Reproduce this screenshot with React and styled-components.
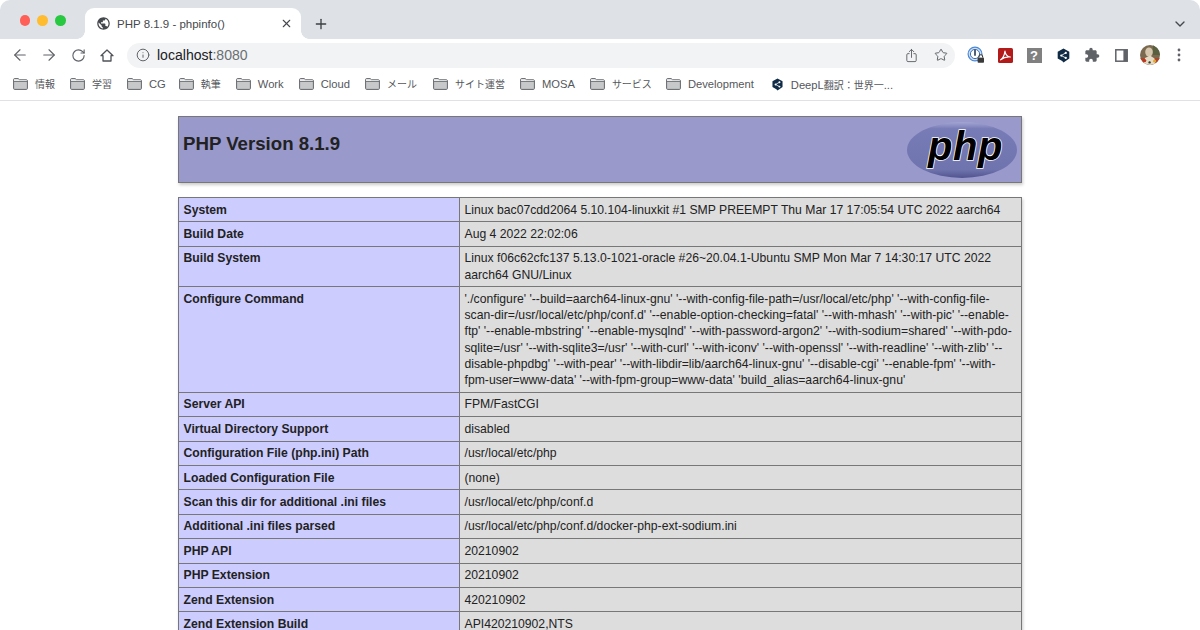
import React from 'react';
import styled, { createGlobalStyle } from 'styled-components';
import { ArrowLeft, ArrowRight, RotateCw, Info, Star, ChevronDown, X, Plus } from 'lucide-react';
import { IoShareOutline } from 'react-icons/io5';
import { MdExtension, MdPublic } from 'react-icons/md';

const SANS = `"Liberation Sans", "Noto Sans CJK JP", sans-serif`;

const GlobalStyle = createGlobalStyle`
  html, body {
    margin: 0;
    padding: 0;
    height: 630px;
    overflow: hidden;
    background: #fff;
    font-family: ${SANS};
  }
`;

const TabStrip = styled.div`
  height: 39px;
  background: #dee1e6;
  display: flex;
  align-items: flex-end;
  border-radius: 10px 10px 0 0;
  color: #3c4043;
`;

const Lights = styled.div`
  display: flex;
  gap: 7px;
  padding: 0 0 13.5px 19.5px;
  width: 66px;
  box-sizing: border-box;
`;

const Light = styled.span`
  width: 11px;
  height: 11px;
  border-radius: 50%;
  background: ${(p) => p.$color};
`;

const Tab = styled.div`
  position: relative;
  width: 216px;
  height: 31px;
  box-sizing: border-box;
  background: #fff;
  border-radius: 9px 9px 0 0;
  display: flex;
  align-items: center;
  padding: 0 8px 0 11px;
  font-size: 11.5px;
  color: #45484c;
  margin-left: 19px;
  &::before, &::after {
    content: '';
    position: absolute;
    bottom: 0;
    width: 8px;
    height: 8px;
  }
  &::before {
    left: -8px;
    background: radial-gradient(circle at 0 0, #dee1e6 7.5px, #fff 8px);
  }
  &::after {
    right: -8px;
    background: radial-gradient(circle at 100% 0, #dee1e6 7.5px, #fff 8px);
  }
`;

const TabTitle = styled.span`
  flex: 1;
  margin-left: 6px;
  white-space: nowrap;
`;

const NewTab = styled.div`
  display: flex;
  align-items: center;
  height: 31px;
  margin-left: 12px;
  color: #3c4043;
`;

const StripEnd = styled.div`
  margin-left: auto;
  height: 31px;
  display: flex;
  align-items: center;
  padding-right: 12px;
  color: #45484c;
`;

const Toolbar = styled.div`
  height: 32px;
  display: flex;
  align-items: center;
  padding: 0 6.5px 0 5.5px;
  background: #fff;
`;

const ToolButton = styled.div`
  width: 29px;
  height: 28px;
  flex: none;
  display: flex;
  align-items: center;
  justify-content: center;
  color: #5f6368;
`;

const Omnibox = styled.div`
  flex: 1;
  height: 25px;
  margin: 0 6.5px 0 5.5px;
  background: #f1f3f4;
  border-radius: 13px;
  display: flex;
  align-items: center;
  padding-left: 9px;
  color: #5f6368;
`;

const Url = styled.div`
  flex: 1;
  margin-left: 7px;
  font-size: 14.05px;
  color: #6b6f73;
  b {
    font-weight: 400;
    color: #202124;
  }
`;

const OmniIcon = styled.div`
  width: 29px;
  display: flex;
  justify-content: center;
  color: #5f6368;
`;

const Bookmarks = styled.div`
  height: 26px;
  padding: 0 0 3px 13px;
  border-bottom: 1px solid #dfe1e5;
  display: flex;
  align-items: center;
  background: #fff;
  box-sizing: content-box;
`;

const Bookmark = styled.div`
  display: flex;
  align-items: center;
  gap: 7px;
  margin-right: ${(p) => p.$end || 15}px;
  font-size: 11.2px;
  color: #54575b;
  white-space: nowrap;
`;

const JpLabel = styled.span`
  font-size: 10px;
  padding-bottom: 1.5px;
`;

const JpRun = styled.span`
  font-size: 10px;
`;

const Page = styled.main`
  width: 844px;
  margin: 15px auto 0;
  color: #222;
`;

const Header = styled.header`
  height: 67px;
  box-sizing: border-box;
  background: #9999cc;
  border: 1px solid #777;
  box-shadow: 1px 2px 3px #ccc;
  display: flex;
  justify-content: space-between;
  padding: 4px 3px 0 4px;
  margin-bottom: 14px;
`;

const Title = styled.h1`
  margin: 11px 0 0;
  font-size: 18.65px;
  line-height: 23px;
  font-weight: 700;
  color: #222;
`;

const InfoTable = styled.table`
  width: 844px;
  table-layout: fixed;
  border-collapse: collapse;
  border: 0;
  box-shadow: 1px 2px 3px #ccc;
  font-size: 12.19px;
  line-height: 16.2px;
`;

const KeyCell = styled.th`
  width: 281px;
  box-sizing: border-box;
  background: #ccccff;
  border: 1px solid #777;
  padding: 3.6px 4.5px;
  text-align: left;
  vertical-align: top;
  font-weight: 700;
  color: #222;
`;

const ValueCell = styled.td`
  background: #dddddd;
  border: 1px solid #777;
  padding: 3.6px 7px 3.6px 4.5px;
  vertical-align: top;
  color: #222;
  overflow-wrap: break-word;
`;

const Folder = () => (
  <svg width="15" height="12" viewBox="0 0 15 12">
    <path d="M.6 1.6C.6.9 1 .6 1.6.6h3.6l1.3 1.2h6.9c.6 0 1 .4 1 1v7.6c0 .6-.4 1-1 1H1.6c-.6 0-1-.4-1-1z" fill="#c6c8ca" stroke="#63666a" strokeWidth="1" />
    <path d="M1 1.2h4l1.2 1.1h7.6v.9H1z" fill="#eceded" />
    <path d="M.8 3.5h13.4" stroke="#63666a" strokeWidth=".8" />
  </svg>
);

const DeepL = ({ size }) => (
  <svg width={size} height={size} viewBox="0 0 16 16">
    <path d="M8 .6l6.2 3.4v7.2L8 15.4l-1.4-1.6-4.8-2.6V4z" fill="#0f2b46" />
    <circle cx="5.6" cy="8" r="1.2" fill="#fff" />
    <circle cx="10.4" cy="5.2" r="1.2" fill="#fff" />
    <circle cx="10.4" cy="10.6" r="1.2" fill="#fff" />
    <path d="M5.6 8l4.8-2.8M5.6 8l4.8 2.6" stroke="#fff" strokeWidth=".9" />
  </svg>
);

const Home = () => (
  <svg width="14" height="13" viewBox="0 0 14 13" fill="none" stroke="#4f5357" strokeWidth="1.3" strokeLinejoin="round">
    <path d="M1 6.7L7 1l6 5.7h-2v5.3H3V6.7z" />
  </svg>
);

const OnePassword = () => (
  <svg width="18" height="18" viewBox="0 0 18 18">
    <circle cx="8" cy="8" r="6.9" fill="#cfe0f7" stroke="#4a88d8" strokeWidth="1.2" />
    <circle cx="8" cy="8" r="4.6" fill="#fff" stroke="#3f6ea8" strokeWidth="1" />
    <rect x="7.1" y="3.6" width="1.8" height="6.4" rx=".9" fill="#3d4f66" />
    <rect x="10.6" y="11.6" width="6.4" height="5.2" rx=".8" fill="#3a3a3a" />
    <path d="M12 11.6v-1a1.8 1.8 0 0 1 3.6 0v1" fill="#fff" stroke="#3a3a3a" strokeWidth="1.1" />
  </svg>
);

const Acrobat = () => (
  <svg width="15" height="15" viewBox="0 0 15 15">
    <rect width="15" height="15" rx="1.6" fill="#b31b1b" />
    <path d="M2.6 11.8c2.2-1.2 3.8-4.4 4.4-8.6.3 3.2 2 5.2 5.4 5.8-3.2-.4-6.6.3-9.8 2.8z" fill="none" stroke="#fff" strokeWidth="1.2" strokeLinejoin="round" />
  </svg>
);

const QuestionBadge = styled.div`
  width: 15px;
  height: 15px;
  background: #808080;
  color: #fff;
  font-size: 13px;
  font-weight: 700;
  line-height: 15px;
  text-align: center;
`;

const SidePanel = () => (
  <svg width="13" height="13" viewBox="0 0 13 13">
    <rect x=".8" y=".8" width="11.4" height="11.4" fill="#fff" stroke="#5f6368" strokeWidth="1.5" />
    <rect x="8.4" y="1" width="3.6" height="11" fill="#5f6368" />
  </svg>
);

const Avatar = () => (
  <svg width="20" height="20" viewBox="0 0 20 20">
    <defs>
      <clipPath id="avatar-clip"><circle cx="10" cy="10" r="10" /></clipPath>
    </defs>
    <g clipPath="url(#avatar-clip)">
      <rect width="20" height="20" fill="#7c6a50" />
      <rect x="13" width="7" height="10" fill="#59603f" />
      <rect y="13" width="20" height="7" fill="#a9472a" />
      <ellipse cx="9" cy="7" rx="3.8" ry="4.6" fill="#d6c6ae" />
      <path d="M3.5 20l1.5-7 5-2.4 4.5 3 1 6.4z" fill="#e6dcc6" />
      <circle cx="4.6" cy="15.6" r="1.7" fill="#c0351f" />
      <circle cx="14.6" cy="16" r="1.6" fill="#e3a72f" />
      <circle cx="9.6" cy="17.4" r="1.2" fill="#2f3a2a" />
    </g>
  </svg>
);

const Dots = () => (
  <svg width="4" height="14" viewBox="0 0 4 14" fill="#5f6368">
    <circle cx="2" cy="2" r="1.4" />
    <circle cx="2" cy="7" r="1.4" />
    <circle cx="2" cy="12" r="1.4" />
  </svg>
);

const PhpLogo = () => (
  <svg width="112" height="58" viewBox="0 0 112 58">
    <defs>
      <linearGradient id="php-oval" x1="0" y1="0" x2="0" y2="1">
        <stop offset="0" stopColor="#a3a6d2" />
        <stop offset="0.12" stopColor="#787cb6" />
        <stop offset="0.85" stopColor="#7074ae" />
        <stop offset="1" stopColor="#50538f" />
      </linearGradient>
    </defs>
    <ellipse cx="56" cy="29" rx="55" ry="28" fill="url(#php-oval)" />
    <text x="59.5" y="38.5" textAnchor="middle" fontFamily="'Liberation Sans', sans-serif" fontStyle="italic" fontWeight="700" fontSize="40" letterSpacing="0.6" fill="#000" stroke="#fff" strokeWidth="1.6" paintOrder="stroke">php</text>
  </svg>
);

const bookmarks = [
  { name: '情報', jp: true },
  { name: '学習', jp: true },
  { name: 'CG', end: 13 },
  { name: '執筆', jp: true },
  { name: 'Work' },
  { name: 'Cloud' },
  { name: 'メール', jp: true, end: 16 },
  { name: 'サイト運営', jp: true },
  { name: 'MOSA' },
  { name: 'サービス', jp: true, end: 14 },
  { name: 'Development', end: 17 },
];

const rows = [
  ['System', 'Linux bac07cdd2064 5.10.104-linuxkit #1 SMP PREEMPT Thu Mar 17 17:05:54 UTC 2022 aarch64'],
  ['Build Date', 'Aug 4 2022 22:02:06'],
  ['Build System', 'Linux f06c62cfc137 5.13.0-1021-oracle #26~20.04.1-Ubuntu SMP Mon Mar 7 14:30:17 UTC 2022 aarch64 GNU/Linux'],
  ['Configure Command', "'./configure' '--build=aarch64-linux-gnu' '--with-config-file-path=/usr/local/etc/php' '--with-config-file-scan-dir=/usr/local/etc/php/conf.d' '--enable-option-checking=fatal' '--with-mhash' '--with-pic' '--enable-ftp' '--enable-mbstring' '--enable-mysqlnd' '--with-password-argon2' '--with-sodium=shared' '--with-pdo-sqlite=/usr' '--with-sqlite3=/usr' '--with-curl' '--with-iconv' '--with-openssl' '--with-readline' '--with-zlib' '--disable-phpdbg' '--with-pear' '--with-libdir=lib/aarch64-linux-gnu' '--disable-cgi' '--enable-fpm' '--with-fpm-user=www-data' '--with-fpm-group=www-data' 'build_alias=aarch64-linux-gnu'"],
  ['Server API', 'FPM/FastCGI'],
  ['Virtual Directory Support', 'disabled'],
  ['Configuration File (php.ini) Path', '/usr/local/etc/php'],
  ['Loaded Configuration File', '(none)'],
  ['Scan this dir for additional .ini files', '/usr/local/etc/php/conf.d'],
  ['Additional .ini files parsed', '/usr/local/etc/php/conf.d/docker-php-ext-sodium.ini'],
  ['PHP API', '20210902'],
  ['PHP Extension', '20210902'],
  ['Zend Extension', '420210902'],
  ['Zend Extension Build', 'API420210902,NTS'],
];

export default function App() {
  return (
    <>
      <GlobalStyle />
      <TabStrip>
        <Lights>
          <Light $color="#ff5f57" />
          <Light $color="#febc2e" />
          <Light $color="#28c840" />
        </Lights>
        <Tab>
          <MdPublic size={15} color="#45484c" />
          <TabTitle>PHP 8.1.9 - phpinfo()</TabTitle>
          <X size={13} strokeWidth={2} />
        </Tab>
        <NewTab><Plus size={16} strokeWidth={2} /></NewTab>
        <StripEnd><ChevronDown size={16} strokeWidth={2} /></StripEnd>
      </TabStrip>
      <Toolbar>
        <ToolButton><ArrowLeft size={18} strokeWidth={1.5} /></ToolButton>
        <ToolButton><ArrowRight size={18} strokeWidth={1.5} /></ToolButton>
        <ToolButton><RotateCw size={15} strokeWidth={1.8} /></ToolButton>
        <ToolButton><Home /></ToolButton>
        <Omnibox>
          <Info size={14} strokeWidth={1.7} />
          <Url><b>localhost</b>:8080</Url>
          <OmniIcon><IoShareOutline size={15} /></OmniIcon>
          <OmniIcon><Star size={14} strokeWidth={1.7} /></OmniIcon>
        </Omnibox>
        <ToolButton><OnePassword /></ToolButton>
        <ToolButton><Acrobat /></ToolButton>
        <ToolButton><QuestionBadge>?</QuestionBadge></ToolButton>
        <ToolButton><DeepL size={15} /></ToolButton>
        <ToolButton><MdExtension size={16} /></ToolButton>
        <ToolButton><SidePanel /></ToolButton>
        <ToolButton><Avatar /></ToolButton>
        <ToolButton><Dots /></ToolButton>
      </Toolbar>
      <Bookmarks>
        {bookmarks.map(({ name, jp, end }) => (
          <Bookmark key={name} $end={end}>
            <Folder />
            {jp ? <JpLabel>{name}</JpLabel> : name}
          </Bookmark>
        ))}
        <Bookmark><DeepL size={13} /><span>DeepL<JpRun>翻訳：世界一</JpRun>...</span></Bookmark>
      </Bookmarks>
      <Page>
        <Header>
          <Title>PHP Version 8.1.9</Title>
          <PhpLogo />
        </Header>
        <InfoTable>
          <colgroup>
            <col style={{ width: 281 }} />
            <col />
          </colgroup>
          <tbody>
            {rows.map(([key, value]) => (
              <tr key={key}>
                <KeyCell>{key}</KeyCell>
                <ValueCell>{value}</ValueCell>
              </tr>
            ))}
          </tbody>
        </InfoTable>
      </Page>
    </>
  );
}
